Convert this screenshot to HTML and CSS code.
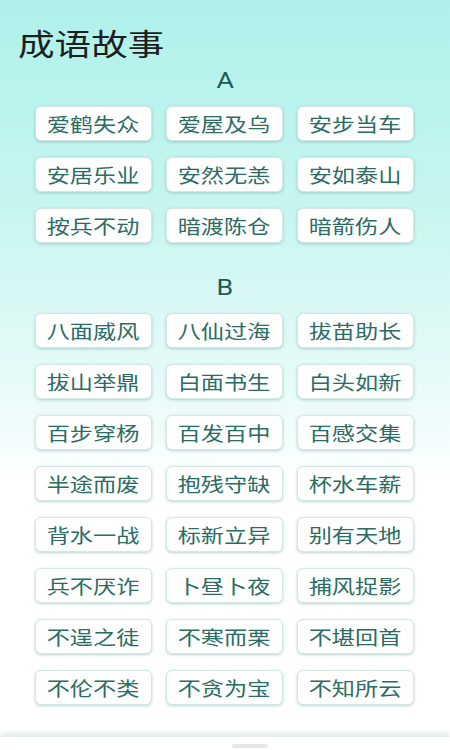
FILE: index.html
```html
<!DOCTYPE html>
<html lang="zh-CN">
<head>
    <meta charset="UTF-8">
    <meta name="viewport" content="width=device-width, initial-scale=1.0">
    <title>成语故事</title>
    <link rel="stylesheet" href="styles.css">
</head>
<body>
    <div class="page">
        <div class="title"><span>成语故事</span></div>

        <div class="letter"><span>A</span></div>
        <div class="grid">
            <div class="idiom"><span>爱鹤失众</span></div>
            <div class="idiom"><span>爱屋及乌</span></div>
            <div class="idiom"><span>安步当车</span></div>
            <div class="idiom"><span>安居乐业</span></div>
            <div class="idiom"><span>安然无恙</span></div>
            <div class="idiom"><span>安如泰山</span></div>
            <div class="idiom"><span>按兵不动</span></div>
            <div class="idiom"><span>暗渡陈仓</span></div>
            <div class="idiom"><span>暗箭伤人</span></div>
        </div>

        <div class="letter letter-b"><span>B</span></div>
        <div class="grid">
            <div class="idiom"><span>八面威风</span></div>
            <div class="idiom"><span>八仙过海</span></div>
            <div class="idiom"><span>拔苗助长</span></div>
            <div class="idiom"><span>拔山举鼎</span></div>
            <div class="idiom"><span>白面书生</span></div>
            <div class="idiom"><span>白头如新</span></div>
            <div class="idiom"><span>百步穿杨</span></div>
            <div class="idiom"><span>百发百中</span></div>
            <div class="idiom"><span>百感交集</span></div>
            <div class="idiom"><span>半途而废</span></div>
            <div class="idiom"><span>抱残守缺</span></div>
            <div class="idiom"><span>杯水车薪</span></div>
            <div class="idiom"><span>背水一战</span></div>
            <div class="idiom"><span>标新立异</span></div>
            <div class="idiom"><span>别有天地</span></div>
            <div class="idiom"><span>兵不厌诈</span></div>
            <div class="idiom"><span>卜昼卜夜</span></div>
            <div class="idiom"><span>捕风捉影</span></div>
            <div class="idiom"><span>不逞之徒</span></div>
            <div class="idiom"><span>不寒而栗</span></div>
            <div class="idiom"><span>不堪回首</span></div>
            <div class="idiom"><span>不伦不类</span></div>
            <div class="idiom"><span>不贪为宝</span></div>
            <div class="idiom"><span>不知所云</span></div>
        </div>
    </div>

    <!-- bottom navigation strip -->
    <div class="bottom-bar">
        <div class="handle"></div>
    </div>
</body>
</html>
```

FILE: styles.css
```css
* {
    margin: 0;
    padding: 0;
    box-sizing: border-box;
}

body {
    width: 450px;
    height: 750px;
    overflow: hidden;
    font-family: "Noto Sans CJK SC", "Noto Sans", sans-serif;
    background: linear-gradient(180deg, #aef1ea 0%, #c6f5f0 27%, #dff9f6 45%, #eefcfb 56%, #ffffff 64%);
    display: flex;
    flex-direction: column;
}

.page {
    flex: 1;
    padding: 22px 0 0;
}

/* the screenshot text is a little stretched sideways */
.title span,
.letter span,
.idiom span {
    display: inline-block;
    transform: scaleX(1.22);
}

.title {
    padding-left: 18px;
    font-size: 30px;
    line-height: 40px;
    color: #1c1f1e;
}

.title span {
    transform-origin: left center;
}

.letter {
    margin-top: 4px;
    text-align: center;
    font-family: Roboto, "Noto Sans", sans-serif;
    font-size: 22px;
    line-height: 30px;
    color: #1d5c53;
}

.letter-b {
    margin-top: 30px;
}

.grid {
    width: 380px;
    margin: 10px auto 0;
    display: grid;
    grid-template-columns: repeat(3, 117px);
    column-gap: 14px;
    row-gap: 16px;
}

.idiom {
    height: 35px;
    background: #ffffff;
    border: 1px solid #d3e8e5;
    border-radius: 6px;
    box-shadow: 0 1px 3px rgba(60, 130, 125, 0.35);
    display: flex;
    align-items: center;
    justify-content: center;
    font-size: 19px;
    color: #2b6c63;
}

.bottom-bar {
    height: 13px;
    background: #ffffff;
    box-shadow: 0 -3px 6px rgba(150, 175, 172, 0.35);
    display: flex;
    justify-content: center;
}

.handle {
    width: 36px;
    height: 4px;
    margin: 7px 0 0 50px;
    border-radius: 2px;
    background: #e4e8e8;
}
```
